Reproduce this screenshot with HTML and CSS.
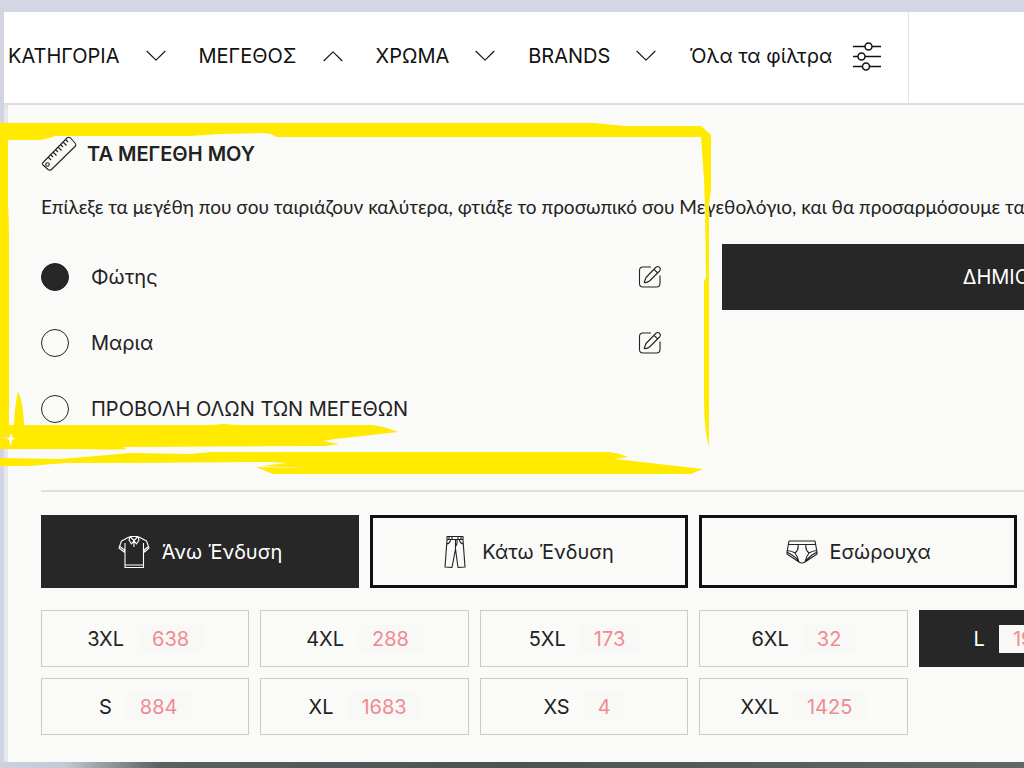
FILE: index.html
```html
<!DOCTYPE html>
<html lang="el">
<head>
<meta charset="utf-8">
<meta name="viewport" content="width=device-width, initial-scale=1">
<title>Τα μεγέθη μου</title>
<link rel="stylesheet" href="styles.css">
</head>
<body>
<svg class="defs" aria-hidden="true">
  <symbol id="chevron" viewBox="0 0 20 12"><path d="M.7 1 10 10.200 19.300 1"/></symbol>
  <symbol id="edit" viewBox="0 0 24 24"><path d="M13 2H5Q1.500 2 1.500 5.500V18.500Q1.500 22 5 22H18.500Q22 22 22 18.500V10.500M6.200 17.500 8 12.500 17.700 2.500Q19.500.7 21.500 2.300 23.200 4 21.600 6L11.500 16Q9 18 6.200 17.500ZM16 4.300 19.700 8"/></symbol>
</svg>
<div class="page">
  <nav class="filters">
    <button class="filter" type="button">ΚΑΤΗΓΟΡΙΑ <svg class="chevron"><use href="#chevron"/></svg></button>
    <button class="filter" type="button" aria-expanded="true">ΜΕΓΕΘΟΣ <svg class="chevron up"><use href="#chevron"/></svg></button>
    <button class="filter" type="button">ΧΡΩΜΑ <svg class="chevron"><use href="#chevron"/></svg></button>
    <button class="filter" type="button">BRANDS <svg class="chevron"><use href="#chevron"/></svg></button>
    <button class="filter all" type="button">Όλα τα φίλτρα
      <svg class="sliders" viewBox="0 0 30 30"><path d="M1 5.500H13M20 5.500H29M1 15.500H6M13 15.500H29M1 25.500H10M18 25.500H29"/><circle cx="16.500" cy="5.500" r="3.500"/><circle cx="9.500" cy="15.500" r="3.500"/><circle cx="14" cy="25.500" r="3.500"/></svg>
    </button>
  </nav>
  <main class="panel">
    <h2 class="title">
      <svg class="ruler" viewBox="0 0 36 36"><path d="M2 26.500 26 2Q28 .6 29.500 2L34 7Q35.500 9 34 10.500L11 33Q9 35 7 33.500L2 29Q.8 27.800 2 26.500ZM7.500 21.500 10 24M10 19 12 21M12.500 16.500 15.500 19.500M15 14 17 16M17.500 11.500 20.500 14.500M20 9 22 11M22.500 6.500 25.500 9.500M25 4 27 6"/><circle cx="6.500" cy="28.500" r="1.800"/></svg>
      ΤΑ ΜΕΓΕΘΗ ΜΟΥ
    </h2>
    <p class="intro">Επίλεξε τα μεγέθη που σου ταιριάζουν καλύτερα, φτιάξε το προσωπικό σου Μεγεθολόγιο, και θα προσαρμόσουμε τα</p>
    <div class="profiles">
      <ul class="people">
        <li><label><input type="radio" name="person" checked>Φώτης</label><button class="edit" type="button" aria-label="Επεξεργασία"><svg><use href="#edit"/></svg></button></li>
        <li><label><input type="radio" name="person">Μαρια</label><button class="edit" type="button" aria-label="Επεξεργασία"><svg><use href="#edit"/></svg></button></li>
        <li><label><input type="radio" name="person">ΠΡΟΒΟΛΗ ΟΛΩΝ ΤΩΝ ΜΕΓΕΘΩΝ</label></li>
      </ul>
      <button class="create" type="button">ΔΗΜΙΟΥΡΓΙΑ +</button>
    </div>
    <hr class="rule">
    <div class="tabs">
      <button class="tab active" type="button"><svg class="shirt" viewBox="0 0 32 34"><path d="M11 2 3.500 6 1 13 6 17 7 14V32.500H25.500V14L26.500 17 31 13 28.500 6 21 2M7 14V8M25.500 14V8M7 30H25.500M2 11.500 6.500 15M30.500 11.500 26 15M12 1.500 11 5 13.500 9 16 5.500 18.500 9 21 5 20 1.500ZM12 1.500 16 5.500 20 1.500M16 5.500V12"/></svg>Άνω Ένδυση</button>
      <button class="tab" type="button"><svg class="trousers" viewBox="0 0 22 34"><path d="M3 1.500H19V5L21 32 14 32.500 11.500 14 8 32.500 1 32 3 5ZM3 4.500H19M11.500 4.500V14M5 1.500V4.500M14 1.500V4.500M8 1.500V4.500M17 1.500V4.500M3 9Q6 8.500 6.500 5M19 9Q16 8.500 15.500 5M11.500 11Q13.500 10 13 5"/></svg>Κάτω Ένδυση</button>
      <button class="tab" type="button"><svg class="briefs" viewBox="0 0 32 24"><path d="M3 1H29L31 12 26 15Q21 19 19 22Q16 24 13 22 11 18 6 15L1 12ZM2.500 4.500H29.500M1 12V14L13 22M31 12V14L19 22M12 4.500Q13 10 9 13 12 17 13 22M20 4.500Q19 10 23 13 20 17 19 22M1.500 10.500Q6 11 9 13M30.500 10.500Q26 11 23 13"/></svg>Εσώρουχα</button>
      <button class="tab" type="button">Παπούτσια</button>
    </div>
    <div class="sizes">
      <button class="size" type="button">3XL <span class="count">638</span></button>
      <button class="size" type="button">4XL <span class="count">288</span></button>
      <button class="size" type="button">5XL <span class="count">173</span></button>
      <button class="size" type="button">6XL <span class="count">32</span></button>
      <button class="size active" type="button">L <span class="count">1935</span></button>
      <button class="size below" type="button">S <span class="count">884</span></button>
      <button class="size" type="button">XL <span class="count">1683</span></button>
      <button class="size" type="button">XS <span class="count">4</span></button>
      <button class="size" type="button">XXL <span class="count">1425</span></button>
    </div>
  </main>
  <svg class="marker" viewBox="0 0 720 480" aria-hidden="true">
    <path d="M0 123H595L625 126H701L711 135V190L709 204V447Q704 430 704 400V281L706 278 705 205 704 179 701 137H276Q272 133 262 133L220 134 190 136H55Q48 139 38 140H8V205Q9 215 9 250V425H14Q15 403 18 392Q23 400 24 425H212L224 424 235 425H370Q384 426 398 432L335 439 323 441 339 444 325 446 123 447 126 449Q115 450 85 449H0V436L9 440 11 446 12 440 15 439 12 437 11 433 9 438 0 436V137Z"/>
    <path d="M0 458 60 459 85 457 130 453 190 454 212 452H609Q619 453 628 457L615 459 703 469 691 474H273L256 467 304 468 262 466 287 463 270 462 130 463 65 463 28 466H0Z"/>
  </svg>
</div>
</body>
</html>
```
FILE: styles.css
```css
* { box-sizing: border-box; }

body {
  margin: 0;
  overflow: hidden;
  color: #222;
  background: linear-gradient(90deg, #cdd1df 0, #c5c9d4 64px, #596060 160px, #4d5253 50%, #626768 100%);
  font: 20px/24px Inter, "Noto Sans", sans-serif;
}

button {
  padding: 0;
  border: 0;
  background: none;
  color: inherit;
  font: inherit;
  white-space: nowrap;
}

svg {
  flex: none;
  fill: none;
  stroke: currentColor;
  stroke-width: 1.1;
  stroke-linejoin: round;
}

.defs { position: absolute; width: 0; height: 0; }

.page {
  position: relative;
  width: 135vw;
  margin-bottom: 6px;
  border-top: 12px solid #d3d7e3;
  border-left: 4px solid #d1d4e2;
}

.filters {
  display: flex;
  height: 93px;
  padding-left: 4px;
  border-bottom: 2px solid #dedede;
  background: #fff;
  color: #111;
}

.filter {
  display: flex;
  align-items: center;
  gap: 26px;
  margin-right: 33px;
  padding-bottom: 4px;
}

.filter.all {
  gap: 20px;
  margin-right: 0;
  padding-right: 26px;
  border-right: 1px solid #e2e5e8;
}

.chevron { width: 20px; height: 12px; }
.up { transform: rotate(180deg); }
.sliders { width: 30px; height: 30px; stroke-width: 1.5; }

.panel {
  padding: 29px 36px 27px 33px;
  border-left: 4px solid #e5e7e8;
  background: #fafaf8;
}

.title {
  display: flex;
  align-items: center;
  gap: 10px;
  height: 40px;
  margin: 0;
  font-size: 20px;
  font-weight: 600;
}

.ruler { width: 36px; height: 36px; }

.intro {
  margin: 21px 0 25px;
  font-family: Lato, Inter, sans-serif;
  font-size: 19px;
  white-space: nowrap;
}

.profiles {
  display: grid;
  grid-template-columns: 1fr 1fr;
  gap: 56px;
  align-items: start;
}

.people { margin: 0; padding: 0; list-style: none; }

.people li {
  display: flex;
  align-items: center;
  justify-content: space-between;
  height: 66px;
}

.people label { display: flex; align-items: center; gap: 22px; }

.people input {
  appearance: none;
  width: 28px;
  height: 28px;
  margin: 0;
  border: 1px solid #222;
  border-radius: 50%;
}

.people input:checked { background: #272727; }

.edit { display: flex; margin-right: 4px; }
.edit svg { width: 24px; height: 24px; }

.create {
  height: 66px;
  background: #272727;
  color: #fff;
}

.rule {
  margin: 48px 0 23px;
  border: 0;
  border-top: 2px solid #e0e0de;
}

.tabs, .sizes { display: grid; gap: 11px; }
.tabs { grid-template-columns: repeat(4, 1fr); }
.sizes { grid-template-columns: repeat(6, 1fr); margin-top: 22px; }

.tab {
  display: flex;
  align-items: center;
  justify-content: center;
  gap: 12px;
  height: 73px;
  border: 3px solid #111;
}

.tab.active, .size.active {
  border-color: #272727;
  background: #272727;
  color: #fff;
}

.shirt { width: 32px; height: 34px; }
.trousers { width: 22px; height: 34px; margin-right: 4px; }
.briefs { width: 32px; height: 24px; }

.size {
  display: flex;
  align-items: center;
  justify-content: center;
  gap: 14px;
  height: 57px;
  border: 1px solid #cbccca;
}

.size.below { grid-column: 1; }

.count {
  padding: 2px 14px;
  background: #f8f8f7;
  color: #f18a90;
}

.marker {
  position: absolute;
  top: -12px;
  left: -4px;
  width: 720px;
  height: 480px;
  fill: #ffea00;
  stroke: none;
  pointer-events: none;
}
```
